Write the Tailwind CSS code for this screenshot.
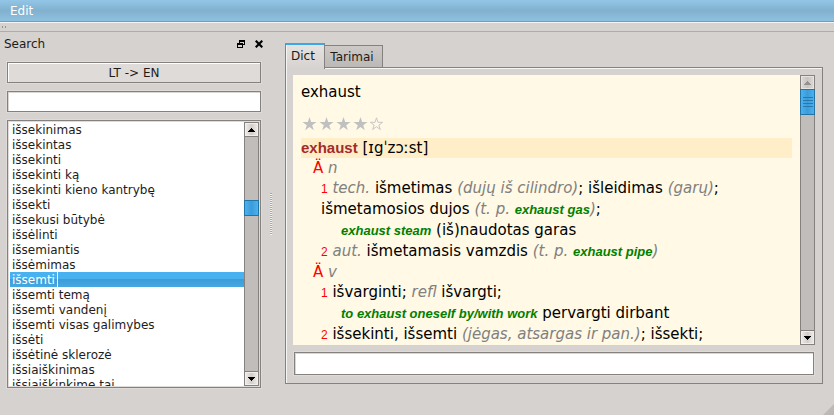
<!DOCTYPE html>
<html lang="lt">
<head>
<meta charset="utf-8">
<meta name="viewport" content="width=device-width, initial-scale=1">
<title>Dictionary</title>
<script src="https://cdn.jsdelivr.net/npm/@tailwindcss/browser@4"></script>
</head>
<body class="relative flex h-screen flex-col overflow-hidden bg-[#d6d2cf] font-['DejaVu_Sans',sans-serif] text-[12px] leading-[15px] text-[#1e1b19]">
  <nav class="flex h-[22px] shrink-0 items-center border-b border-[#6d9fbd] bg-linear-to-b from-[#93c6e7] via-[#81b1ce] to-[#8ec0e0] px-[10px] pt-px text-white">
    <button type="button">Edit</button>
  </nav>
  <div class="flex h-[10px] shrink-0 items-center gap-[2px] border-t border-b border-t-[#f6f5f4] border-b-[#b0acaa] px-[2px]" role="toolbar" aria-label="Tools">
    <span class="h-[2px] w-px bg-[#94918f]"></span><span class="h-[2px] w-px bg-[#94918f]"></span>
  </div>

  <main class="flex min-h-0 flex-1">
    <aside class="flex w-[261px] shrink-0 flex-col gap-2 pb-[27px] pl-[7px]">
      <div class="-ml-[3px] flex h-[22px] items-center pt-[2px]">
        <label for="word" class="flex-1">Search</label>
        <button type="button" aria-label="Float panel" class="mr-[10px]">
          <svg width="8" height="8" viewBox="0 0 8 8" fill="none" stroke="#000" shape-rendering="crispEdges"><path d="M2 0.5h6M2 1.5h6M7.5 0v5M2.500 0v3M5 4.5h3M0 3.5h6M0 4.5h6M.5 3v5M5.5 3v5M0 7.5h6"/></svg>
        </button>
        <button type="button" aria-label="Close panel" class="-mr-[2px]">
          <svg width="8" height="8" viewBox="0 0 8 8" stroke="#000" stroke-width="2.2"><path d="M.7.7 7.3 7.3M7.3.7.7 7.3"/></svg>
        </button>
      </div>
      <button type="button" class="h-[21px] shrink-0 border border-[#84817f] bg-[#dfdbd8] pt-px shadow-[inset_1px_1px_0_#fff,0_0_0_1px_#dedbd8]">LT -&gt; EN</button>
      <input id="word" type="text" class="h-[21px] w-full shrink-0 border border-[#84817f] bg-white px-1 shadow-[inset_1px_1px_0_#d9d6d4,0_0_0_1px_#dedbd8] outline-none">
      <div class="flex min-h-0 flex-1 border border-[#84817f] bg-white p-px shadow-[inset_0_0_0_1px_#dedbd8,0_0_0_1px_#dedbd8]">
        <ul role="listbox" aria-label="Words" class="min-w-0 flex-1 overflow-hidden pl-px leading-[17px] whitespace-nowrap *:h-[15px] *:pl-[2px]">
          <li role="option">išsekinimas</li>
          <li role="option">išsekintas</li>
          <li role="option">išsekinti</li>
          <li role="option">išsekinti ką</li>
          <li role="option">išsekinti kieno kantrybę</li>
          <li role="option">išsekti</li>
          <li role="option">išsekusi būtybė</li>
          <li role="option">išsėlinti</li>
          <li role="option">išsemiantis</li>
          <li role="option">išsėmimas</li>
          <li role="option" aria-selected="true" class="bg-linear-to-b from-[#48b2f1] from-45% via-[#3c9cd8] via-50% to-[#46a8e3] text-white"><span class="block h-full w-fit border-r border-white pr-[2px]">išsemti</span></li>
          <li role="option">išsemti temą</li>
          <li role="option">išsemti vandenį</li>
          <li role="option">išsemti visas galimybes</li>
          <li role="option">išsėti</li>
          <li role="option">išsėtinė sklerozė</li>
          <li role="option">išsiaiškinimas</li>
          <li role="option">išsiaiškinkime tai</li>
        </ul>
        <div class="flex w-[15px] flex-col border border-[#84817f] bg-[#c1bdba]">
          <button type="button" aria-label="Scroll up" class="flex h-[14px] shrink-0 items-center justify-center border-b border-[#84817f] bg-linear-to-r from-[#efedec] via-[#d2cecb] to-[#efedec] shadow-[inset_0_0_0_1px_#f1efee]">
            <svg width="7" height="4" viewBox="0 0 7 4" shape-rendering="crispEdges"><path d="M3 0h1v1h1v1h1v1h1v1H0V3h1V2h1V1h1z"/></svg>
          </button>
          <div class="flex min-h-0 flex-1 flex-col">
            <div class="grow-[63]"></div>
            <div class="-mx-px h-[16px] shrink-0 border border-[#2373a5] bg-linear-to-r from-[#48b2f1] via-[#3c9cd8] to-[#48b2f1]"></div>
            <div class="grow-[155]"></div>
          </div>
          <button type="button" aria-label="Scroll down" class="flex h-[14px] shrink-0 items-center justify-center border-t border-[#84817f] bg-linear-to-r from-[#efedec] via-[#d2cecb] to-[#efedec] shadow-[inset_0_0_0_1px_#f1efee]">
            <svg width="7" height="4" viewBox="0 0 7 4" shape-rendering="crispEdges"><path d="M0 0h7v1H6v1H5v1H4v1H3V3H2V2H1V1H0z"/></svg>
          </button>
        </div>
      </div>
    </aside>

    <div class="flex w-[24px] shrink-0 items-center pl-[9px] pb-[20px]" role="separator" aria-orientation="vertical">
      <div class="h-[42px] w-[2px] bg-[repeating-linear-gradient(to_bottom,#aaa6a3_0_1px,#f4f3f2_1px_2px)]"></div>
    </div>

    <section class="mr-[11px] mb-[31px] flex min-w-0 flex-1 flex-col pt-[11px]">
      <div role="tablist" class="z-10 -mb-[2px] flex items-end">
        <button type="button" role="tab" aria-selected="true" class="z-10 h-[26px] w-[40px] border-x border-t-2 border-x-[#84817f] border-t-[#3fa6e4] bg-linear-to-b from-[#e5e2e0] to-[#d6d2cf] pr-[4px] pb-px shadow-[inset_1px_0_0_#f6f5f4]">Dict</button>
        <button type="button" role="tab" aria-selected="false" class="mb-px -ml-px h-[23px] w-[59px] border border-[#84817f] bg-linear-to-b from-[#cdc9c6] to-[#bcb8b5] pt-px pr-[3px]">Tarimai</button>
      </div>
      <div role="tabpanel" class="flex min-h-0 flex-1 flex-col gap-[7px] border border-[#84817f] p-[7px] pb-2 shadow-[inset_1px_1px_0_#f6f5f4]">
        <div class="flex min-h-0 flex-1">
          <article class="min-w-0 flex-1 overflow-hidden bg-[#fff9e5] px-2 text-[15px] leading-[21px] whitespace-nowrap text-black [&_b]:leading-none [&_span]:leading-none">
            <h1 class="pt-[7px]">exhaust</h1>
            <div class="mt-[10px] mb-[4px] text-[#c0c0c0]" aria-label="4 of 5">
              <svg width="84" height="21" viewBox="0 0 84 21" fill="currentColor" stroke="none">
                <defs><path id="star" d="M0-7 1.7-1.9H7L2.7 1.2 4.3 6.3 0 3.1-4.3 6.3-2.7 1.2-7-1.9h5.3z"/></defs>
                <use href="#star" x="8.500" y="11"/><use href="#star" x="25.500" y="11"/><use href="#star" x="42.500" y="11"/><use href="#star" x="59.500" y="11"/>
                <use href="#star" transform="translate(75.500 11) scale(.88)" fill="none" stroke="currentColor"/>
              </svg>
            </div>
            <p class="bg-[#ffeec8] leading-[20px]"><b class="font-['Liberation_Sans',sans-serif] text-[#a52a2a]">exhaust</b> [ɪgˈzɔːst]</p>
            <p class="pl-3 leading-[20px]"><span class="text-[#f00]">Ä</span> <i class="text-[#808080]">n</i></p>
            <p class="pl-5"><span class="font-['Liberation_Sans',sans-serif] text-[12px] text-[#f00]">1</span> <i class="text-[#808080]">tech.</i> išmetimas <i class="text-[#808080]">(dujų iš cilindro)</i>; išleidimas <i class="text-[#808080]">(garų)</i>;</p>
            <p class="pl-5">išmetamosios dujos <i class="text-[#808080]">(t. p. <b class="font-['Liberation_Sans',sans-serif] text-[13px] text-[#008000]">exhaust gas</b>)</i>;</p>
            <p class="pl-10"><b class="font-['Liberation_Sans',sans-serif] text-[13px] text-[#008000] italic">exhaust steam</b> (iš)naudotas garas</p>
            <p class="pl-5"><span class="font-['Liberation_Sans',sans-serif] text-[12px] text-[#f00]">2</span> <i class="text-[#808080]">aut.</i> išmetamasis vamzdis <i class="text-[#808080]">(t. p. <b class="font-['Liberation_Sans',sans-serif] text-[13px] text-[#008000]">exhaust pipe</b>)</i></p>
            <p class="pl-3 leading-[20px]"><span class="text-[#f00]">Ä</span> <i class="text-[#808080]">v</i></p>
            <p class="pl-5"><span class="font-['Liberation_Sans',sans-serif] text-[12px] text-[#f00]">1</span> išvarginti; <i class="text-[#808080]">refl</i> išvargti;</p>
            <p class="pl-10"><b class="font-['Liberation_Sans',sans-serif] text-[13px] text-[#008000] italic">to exhaust oneself by/with work</b> pervargti dirbant</p>
            <p class="pl-5"><span class="font-['Liberation_Sans',sans-serif] text-[12px] text-[#f00]">2</span> išsekinti, išsemti <i class="text-[#808080]">(jėgas, atsargas ir pan.)</i>; išsekti;</p>
          </article>
          <div class="flex w-[15px] flex-col border border-[#84817f] bg-[#c1bdba]">
            <button type="button" aria-label="Scroll up" disabled class="flex h-[13px] shrink-0 items-center justify-center bg-linear-to-r from-[#dedad8] via-[#c8c4c1] to-[#dedad8] shadow-[inset_0_0_0_1px_#e6e3e1]">
              <svg width="7" height="4" viewBox="0 0 7 4" fill="#94918f" shape-rendering="crispEdges"><path d="M3 0h1v1h1v1h1v1h1v1H0V3h1V2h1V1h1z"/></svg>
            </button>
            <div class="flex min-h-0 flex-1 flex-col">
              <div class="-mx-px flex h-[26px] shrink-0 flex-col items-center justify-center gap-[2px] border border-[#2373a5] bg-linear-to-r from-[#48b2f1] via-[#3c9cd8] to-[#48b2f1]">
                <span class="h-px w-[10px] bg-[#2878ab]"></span><span class="h-px w-[10px] bg-[#2878ab]"></span><span class="h-px w-[10px] bg-[#2878ab]"></span><span class="h-px w-[10px] bg-[#2878ab]"></span>
              </div>
            </div>
            <button type="button" aria-label="Scroll down" class="flex h-[14px] shrink-0 items-center justify-center border-t border-[#84817f] bg-linear-to-r from-[#efedec] via-[#d2cecb] to-[#efedec] shadow-[inset_0_0_0_1px_#f1efee]">
              <svg width="7" height="4" viewBox="0 0 7 4" shape-rendering="crispEdges"><path d="M0 0h7v1H6v1H5v1H4v1H3V3H2V2H1V1H0z"/></svg>
            </button>
          </div>
        </div>
        <input type="text" aria-label="Find in article" class="mx-px h-[23px] shrink-0 border border-[#84817f] bg-white px-1 shadow-[inset_1px_1px_0_#d9d6d4,0_0_0_1px_#dedbd8] outline-none">
      </div>
    </section>
  </main>
  <svg class="absolute right-0 bottom-0" width="11" height="11" viewBox="0 0 11 11" fill="#bdb9b6" aria-hidden="true"><path d="M11 0v11H0z"/></svg>
</body>
</html>
